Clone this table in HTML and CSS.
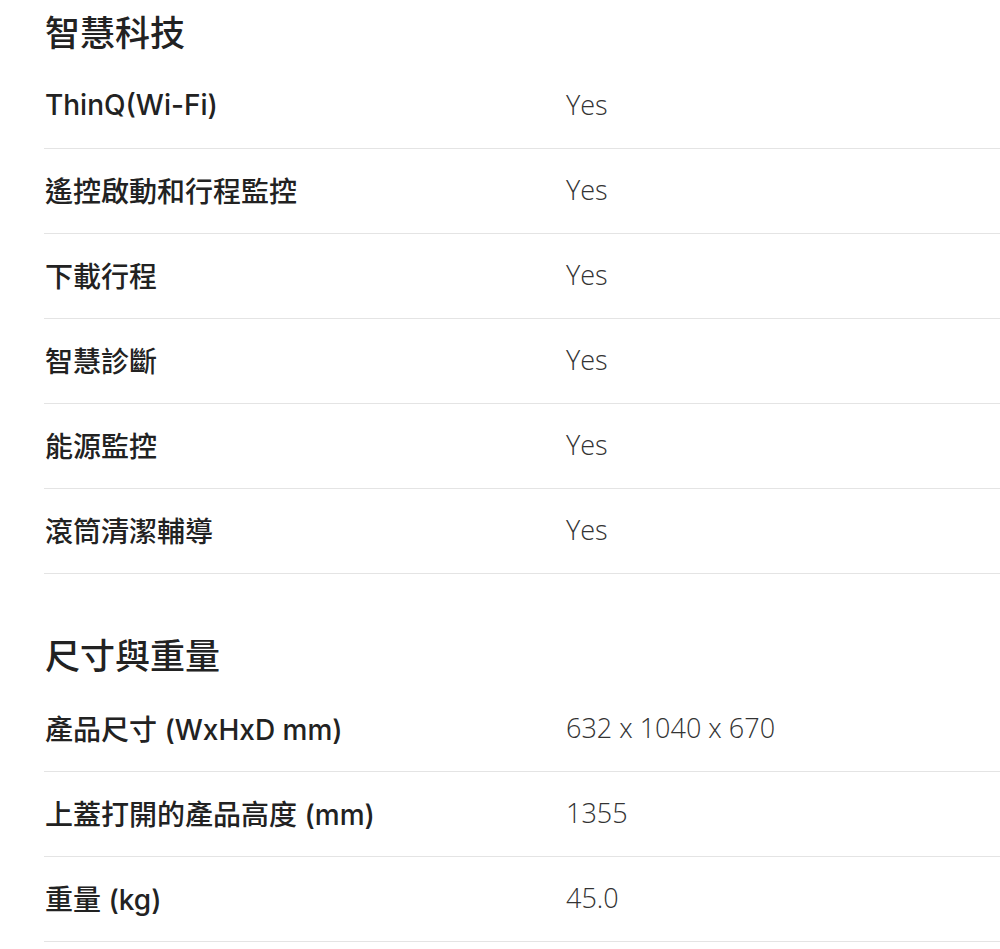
FILE: index.html
```html
<!DOCTYPE html>
<html lang="zh-Hant">
<head>
<meta charset="utf-8">
<title>規格</title>
<link rel="stylesheet" href="styles.css">
</head>
<body>
<div class="specs">
  <section class="spec-group">
    <h2 class="spec-title">智慧科技</h2>
    <dl class="spec-list">
      <div class="spec-row"><dt>ThinQ(Wi-Fi)</dt><dd>Yes</dd></div>
      <div class="spec-row"><dt>遙控啟動和行程監控</dt><dd>Yes</dd></div>
      <div class="spec-row"><dt>下載行程</dt><dd>Yes</dd></div>
      <div class="spec-row"><dt>智慧診斷</dt><dd>Yes</dd></div>
      <div class="spec-row"><dt>能源監控</dt><dd>Yes</dd></div>
      <div class="spec-row"><dt>滾筒清潔輔導</dt><dd>Yes</dd></div>
    </dl>
  </section>
  <section class="spec-group">
    <h2 class="spec-title">尺寸與重量</h2>
    <dl class="spec-list">
      <div class="spec-row"><dt>產品尺寸 (WxHxD mm)</dt><dd>632 x 1040 x 670</dd></div>
      <div class="spec-row"><dt>上蓋打開的產品高度 (mm)</dt><dd>1355</dd></div>
      <div class="spec-row"><dt>重量 (kg)</dt><dd>45.0</dd></div>
    </dl>
  </section>
</div>
</body>
</html>
```

FILE: styles.css
```css
html, body {
  margin: 0;
  padding: 0;
  background: #ffffff;
  overflow: hidden;
}
body {
  font-family: "Open Sans", "Noto Sans CJK TC", sans-serif;
  color: #222222;
}
.specs {
  margin-left: 44px;
  width: 956px;
}
.spec-group + .spec-group {
  margin-top: 49px;
}
.spec-title {
  margin: 0;
  height: 64px;
  display: flex;
  align-items: center;
  padding-left: 1px;
  font-size: 35px;
  font-weight: 500;
  line-height: 1;
  color: #222222;
}
.spec-list {
  margin: 0;
  padding: 0;
}
.spec-row {
  box-sizing: border-box;
  display: grid;
  grid-template-columns: 522px 1fr;
  align-items: center;
  height: 85px;
  padding-bottom: 3px;
  border-bottom: 1px solid #e4e4e4;
}
.spec-row dt {
  margin: 0;
  padding-left: 1px;
  font-family: "Inter", "Noto Sans CJK TC", sans-serif;
  font-size: 28px;
  font-weight: 500;
  color: #222222;
}
.spec-row dd {
  margin: 0;
  font-size: 27px;
  font-weight: 300;
  color: #333333;
}
```
